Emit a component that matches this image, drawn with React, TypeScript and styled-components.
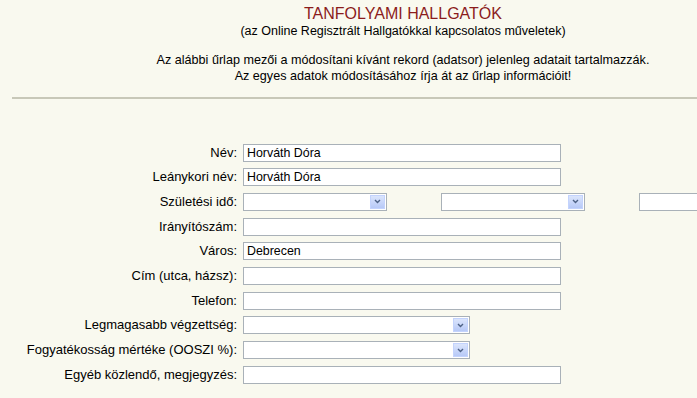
import React from "react";
import styled, { createGlobalStyle } from "styled-components";

const Global = createGlobalStyle`
  html, body { margin: 0; padding: 0; background: #f9f9ef; overflow: hidden; }
  body { font-family: "Liberation Sans", Arial, sans-serif; color: #000; }
`;

const Page = styled.div`
  width: 806px;
  padding-top: 4px;
`;

const Header = styled.div`
  display: flex;
  flex-direction: column;
  align-items: center;
  text-align: center;
`;

const Title = styled.div`
  font-size: 16px;
  line-height: 19px;
  color: #8b1c1c;
`;

const Subtitle = styled.div`
  font-size: 12.5px;
  line-height: 14px;
  margin-top: 1px;
`;

const Intro = styled.div`
  font-size: 12.6px;
  line-height: 16px;
  margin-top: 14px;
`;

const Rule = styled.div`
  margin: 13px 0 0 12px;
  height: 2px;
  background: #c8c8b8;
`;

const Form = styled.div`
  display: grid;
  grid-template-columns: 237px auto;
  column-gap: 6px;
  grid-auto-rows: 24.7px;
  margin-top: 44.5px;
  font-size: 13px;
`;

const Label = styled.div`
  text-align: right;
  height: 18px;
  line-height: 18px;
  white-space: nowrap;
`;

const Field = styled.div`
  display: flex;
  align-items: flex-start;
  gap: 54px;
`;

const TextInput = styled.input<{ $w?: number }>`
  box-sizing: border-box;
  width: ${(p) => p.$w ?? 318}px;
  height: 18px;
  margin: 0;
  padding: 0 3px;
  border: 1px solid #a9b1b8;
  background: #fff;
  font-family: "Liberation Sans", Arial, sans-serif;
  font-size: 12.4px;
  color: #000;
  outline: none;
`;

const SelectBox = styled.div<{ $w: number }>`
  box-sizing: border-box;
  width: ${(p) => p.$w}px;
  height: 18px;
  border: 1px solid #a9b1b8;
  background: #fff;
  display: flex;
  justify-content: flex-end;
  padding: 1px;
`;

const ArrowButton = styled.div`
  width: 15px;
  height: 100%;
  box-sizing: border-box;
  border: 1px solid #c3d3fd;
  background: linear-gradient(#dbe5fc, #b7c9f7);
  display: flex;
  align-items: center;
  justify-content: center;
`;

const Chevron = () => (
  <svg width="7" height="5" viewBox="0 0 7 5">
    <path d="M1 1 L3.5 3.5 L6 1" fill="none" stroke="#4d6185" strokeWidth="1.4" />
  </svg>
);

const Select = ({ w }: { w: number }) => (
  <SelectBox $w={w}>
    <ArrowButton>
      <Chevron />
    </ArrowButton>
  </SelectBox>
);

export default function App() {
  return (
    <Page>
      <Global />
      <Header>
        <Title>TANFOLYAMI HALLGATÓK</Title>
        <Subtitle>(az Online Regisztrált Hallgatókkal kapcsolatos műveletek)</Subtitle>
        <Intro>
          Az alábbi űrlap mezői a módosítani kívánt rekord (adatsor) jelenleg adatait tartalmazzák.
          <br />
          Az egyes adatok módosításához írja át az űrlap információit!
        </Intro>
      </Header>
      <Rule />
      <Form>
        <Label>Név:</Label>
        <Field><TextInput defaultValue="Horváth Dóra" /></Field>
        <Label>Leánykori név:</Label>
        <Field><TextInput defaultValue="Horváth Dóra" /></Field>
        <Label>Születési idő:</Label>
        <Field>
          <Select w={144} />
          <Select w={144} />
          <TextInput $w={80} />
        </Field>
        <Label>Irányítószám:</Label>
        <Field><TextInput /></Field>
        <Label>Város:</Label>
        <Field><TextInput defaultValue="Debrecen" /></Field>
        <Label>Cím (utca, házsz):</Label>
        <Field><TextInput /></Field>
        <Label>Telefon:</Label>
        <Field><TextInput /></Field>
        <Label>Legmagasabb végzettség:</Label>
        <Field><Select w={227} /></Field>
        <Label>Fogyatékosság mértéke (OOSZI %):</Label>
        <Field><Select w={227} /></Field>
        <Label>Egyéb közlendő, megjegyzés:</Label>
        <Field><TextInput /></Field>
      </Form>
    </Page>
  );
}
